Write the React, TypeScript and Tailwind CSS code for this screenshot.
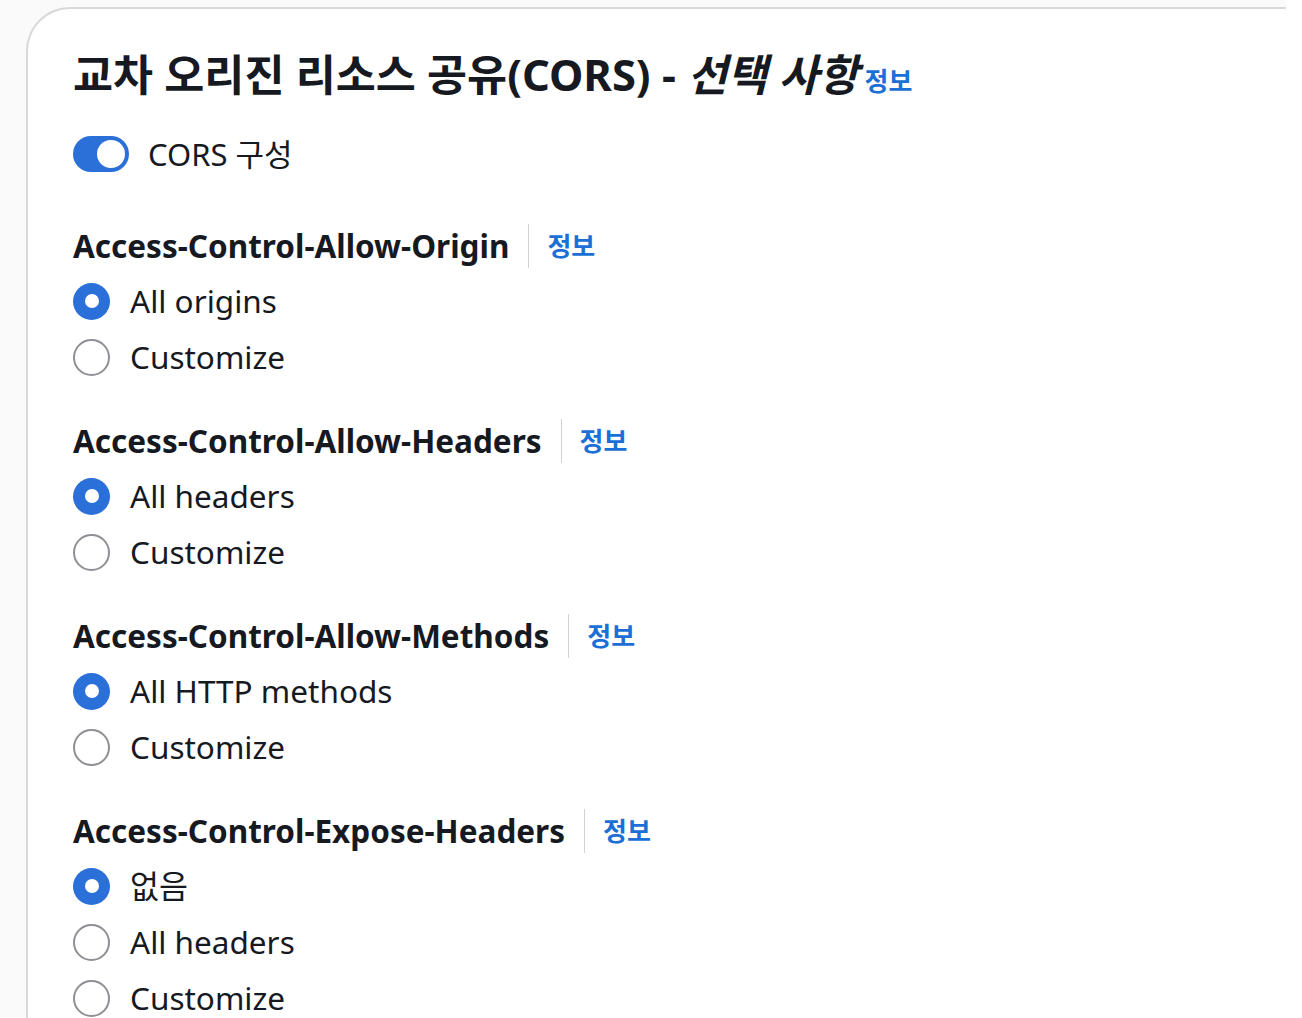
const font = { fontFamily: '"Noto Sans", "Noto Sans CJK KR", sans-serif' }

type Option = { label: string; checked?: boolean }

const sections: { title: string; options: Option[] }[] = [
  {
    title: 'Access-Control-Allow-Origin',
    options: [{ label: 'All origins', checked: true }, { label: 'Customize' }],
  },
  {
    title: 'Access-Control-Allow-Headers',
    options: [{ label: 'All headers', checked: true }, { label: 'Customize' }],
  },
  {
    title: 'Access-Control-Allow-Methods',
    options: [{ label: 'All HTTP methods', checked: true }, { label: 'Customize' }],
  },
  {
    title: 'Access-Control-Expose-Headers',
    options: [{ label: '없음', checked: true }, { label: 'All headers' }, { label: 'Customize' }],
  },
]

function Radio({ label, checked }: Option) {
  return (
    <label className="flex h-[56px] items-center gap-[20px]">
      {checked ? (
        <span className="flex h-[37px] w-[37px] items-center justify-center rounded-full bg-[#2b6fd8]">
          <span className="h-[14px] w-[14px] rounded-full bg-white" />
        </span>
      ) : (
        <span className="h-[37px] w-[37px] rounded-full border-[2.5px] border-[#8f8f96] bg-white" />
      )}
      <span className="text-[31.5px] leading-none text-[#16191f]">{label}</span>
    </label>
  )
}

function Section({ title, options }: { title: string; options: Option[] }) {
  return (
    <div className="mb-[34px]">
      <div className="flex h-[44px] items-center">
        <h3 className="text-[31.5px] font-bold leading-none text-[#16191f]">{title}</h3>
        <span className="ml-[19px] h-[44px] w-px bg-[#d1d1d6]" />
        <a className="ml-[18px] text-[26px] font-semibold leading-none text-[#1b6fd6]">정보</a>
      </div>
      <div className="mt-[5px]">
        {options.map((o) => (
          <Radio key={o.label} {...o} />
        ))}
      </div>
    </div>
  )
}

export default function App() {
  return (
    <div className="min-h-[1018px] overflow-hidden bg-white" style={font}>
      <div className="w-[1286px] bg-[#fafafa] pl-[26px] pt-[7px]">
        <div className="h-[1011px] rounded-tl-[44px] border-l-2 border-t-2 border-[#d9d9d9] bg-white pl-[45px] pt-[40px]">
          <h2 className="flex items-baseline text-[43.5px] font-bold leading-[50px] text-[#16191f]">
            <span>교차 오리진 리소스 공유(CORS) -&nbsp;</span>
            <em className="italic">선택 사항</em>
            <a className="ml-[6px] text-[26px] font-semibold not-italic text-[#1b6fd6]">정보</a>
          </h2>

          <div className="mt-[30px] flex h-[36px] items-center gap-[19px]">
            <span className="flex h-[36px] w-[56px] items-center justify-end rounded-full bg-[#2b6fd8] pr-[4px]">
              <span className="h-[28px] w-[28px] rounded-full bg-white" />
            </span>
            <span className="text-[31px] leading-none text-[#16191f]">CORS 구성</span>
          </div>

          <div className="mt-[52px]">
            {sections.map((s) => (
              <Section key={s.title} {...s} />
            ))}
          </div>
        </div>
      </div>
    </div>
  )
}
